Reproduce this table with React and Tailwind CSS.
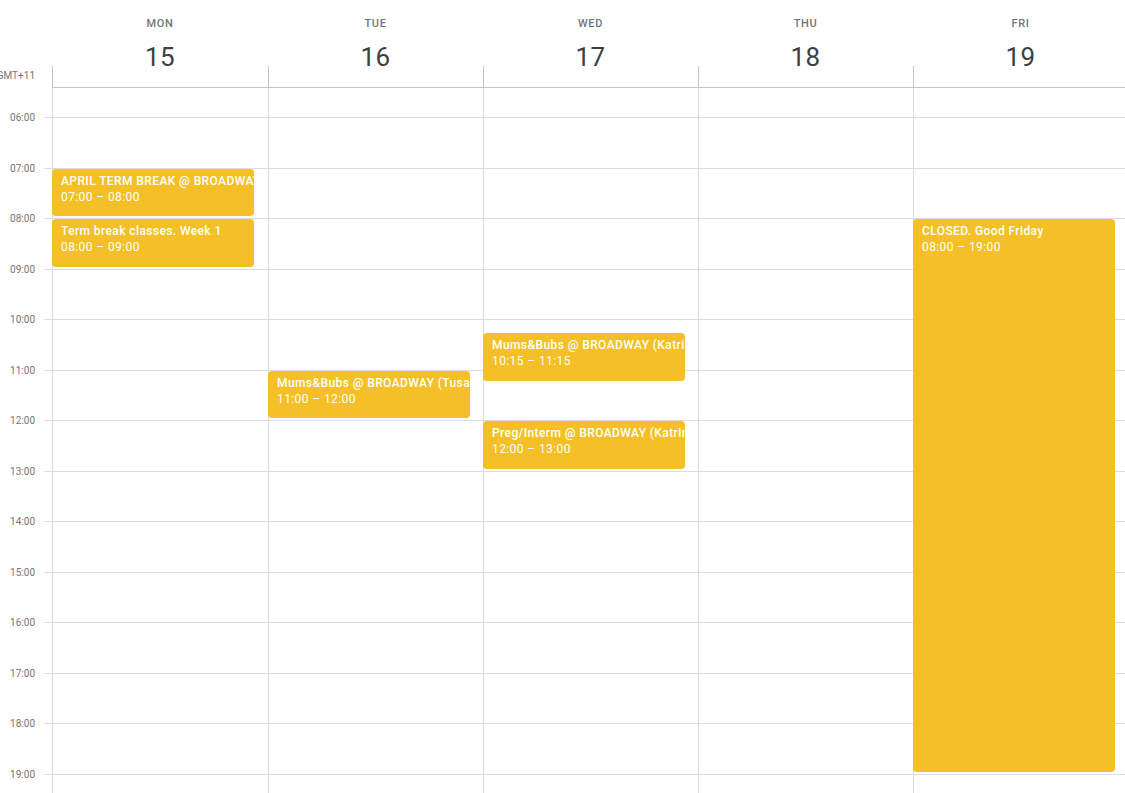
import React from "react";

const days = [
  { name: "MON", num: "15", w: "w-[216px]" },
  { name: "TUE", num: "16", w: "w-[215px]" },
  { name: "WED", num: "17", w: "w-[215px]" },
  { name: "THU", num: "18", w: "w-[215px]" },
  { name: "FRI", num: "19", w: "w-[215px]" },
];

// hour line positions relative to body top
const hourY = { 5: -21, 6: 29, 7: 80, 8: 130, 9: 181, 10: 231, 11: 282, 12: 332, 13: 383, 14: 433, 15: 484, 16: 534, 17: 585, 18: 635, 19: 686, 20: 736 };
const yAt = (t) => {
  const h = Math.floor(t);
  const f = t - h;
  return hourY[h] + (hourY[h + 1] - hourY[h]) * f;
};

const hours = [
  { label: "06:00", h: "h-[51px]" },
  { label: "07:00", h: "h-[50px]" },
  { label: "08:00", h: "h-[51px]" },
  { label: "09:00", h: "h-[50px]" },
  { label: "10:00", h: "h-[51px]" },
  { label: "11:00", h: "h-[50px]" },
  { label: "12:00", h: "h-[51px]" },
  { label: "13:00", h: "h-[50px]" },
  { label: "14:00", h: "h-[51px]" },
  { label: "15:00", h: "h-[50px]" },
  { label: "16:00", h: "h-[51px]" },
  { label: "17:00", h: "h-[50px]" },
  { label: "18:00", h: "h-[51px]" },
  { label: "19:00", h: "h-[50px]" },
];

const events = [
  { day: 0, start: 7, end: 8, title: "APRIL TERM BREAK @ BROADWAY (Katrina)", time: "07:00 – 08:00" },
  { day: 0, start: 8, end: 9, title: "Term break classes. Week 1", time: "08:00 – 09:00" },
  { day: 1, start: 11, end: 12, title: "Mums&Bubs @ BROADWAY (Tusa)", time: "11:00 – 12:00" },
  { day: 2, start: 10.25, end: 11.25, title: "Mums&Bubs @ BROADWAY (Katrina)", time: "10:15 – 11:15" },
  { day: 2, start: 12, end: 13, title: "Preg/Interm @ BROADWAY (Katrina)", time: "12:00 – 13:00" },
  { day: 4, start: 8, end: 19, title: "CLOSED. Good Friday", time: "08:00 – 19:00" },
];

export default function App() {
  return (
    <div
      className="w-[1125px] h-[793px] overflow-hidden bg-white"
      style={{ fontFamily: "Roboto, 'Liberation Sans', sans-serif" }}
    >
      {/* Header */}
      <div className="flex h-[66px]">
        <div className="w-[52px] shrink-0" />
        {days.map((d) => (
          <div key={d.name} className={`${d.w} shrink-0 flex flex-col items-center`}>
            <div className="pt-[16px] text-[11px] leading-[16px] font-medium text-[#70757a] tracking-[0.6px]">
              {d.name}
            </div>
            <div className="mt-[10px] text-[26px] leading-[30px] text-[#3c4043] tracking-[0.5px]">{d.num}</div>
          </div>
        ))}
      </div>
      <div className="flex h-[22px]">
        <div className="w-[52px] shrink-0 relative">
          <div className="absolute right-[17px] top-[4px] text-[10px] leading-[12px] text-[#70757a] whitespace-nowrap">
            GMT+11
          </div>
        </div>
        {days.map((d) => (
          <div key={d.name} className={`${d.w} shrink-0 border-l border-b border-[#c4c7c5]`} />
        ))}
      </div>

      {/* Body */}
      <div className="relative h-[705px]">
        <div className="flex flex-col">
          <div className="h-[29px]" />
          {hours.map((r) => (
            <div key={r.label} className={`flex ${r.h}`}>
              <div className="w-[44px] shrink-0 text-right pr-[9px] text-[10px] leading-[12px] -mt-[5px] text-[#70757a]">
                {r.label}
              </div>
              <div className="flex-1 border-t border-[#dadce0]" />
            </div>
          ))}
        </div>

        <div className="absolute top-0 bottom-0 left-[52px] flex">
          {days.map((d, di) => (
            <div key={d.name} className={`${d.w} shrink-0 h-full border-l border-[#dadce0] relative`}>
              {events
                .filter((e) => e.day === di)
                .map((e) => {
                  const top = yAt(e.start) + 1;
                  const height = yAt(e.end) - yAt(e.start) - 3;
                  return (
                    <div
                      key={e.title}
                      className="absolute left-[-1px] w-[202px] rounded-[4px] bg-[#f5bf27] text-white overflow-hidden pl-[9px] pt-[4px] text-[12px] leading-[16px] tracking-[0.4px]"
                      style={{ top: Math.round(top), height: Math.round(height) }}
                    >
                      <div className="font-medium whitespace-nowrap">{e.title}</div>
                      <div className="whitespace-nowrap">{e.time}</div>
                    </div>
                  );
                })}
            </div>
          ))}
        </div>
      </div>
    </div>
  );
}
